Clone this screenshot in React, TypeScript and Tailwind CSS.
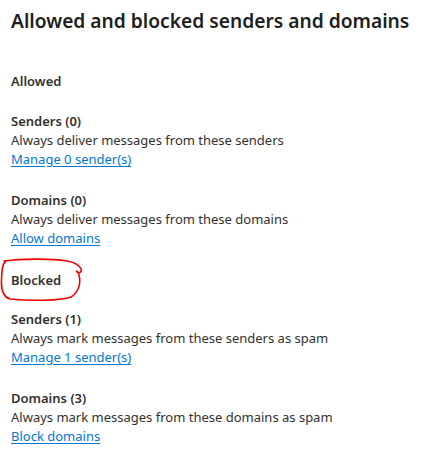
const font = { fontFamily: '"Noto Sans", "Open Sans", Arial, sans-serif' };

type Item = { title: string; text: string; link: string };

const allowed: Item[] = [
  { title: 'Senders (0)', text: 'Always deliver messages from these senders', link: 'Manage 0 sender(s)' },
  { title: 'Domains (0)', text: 'Always deliver messages from these domains', link: 'Allow domains' },
];

const blocked: Item[] = [
  { title: 'Senders (1)', text: 'Always mark messages from these senders as spam', link: 'Manage 1 sender(s)' },
  { title: 'Domains (3)', text: 'Always mark messages from these domains as spam', link: 'Block domains' },
];

function Group({ item }: { item: Item }) {
  return (
    <div className="flex flex-col text-[13px] leading-[19px] text-[#323130]">
      <span className="font-semibold">{item.title}</span>
      <span>{item.text}</span>
      <a href="#" className="self-start text-[#0078d4] underline underline-offset-2">
        {item.link}
      </a>
    </div>
  );
}

export default function App() {
  return (
    <div className="relative min-h-[469px] w-[425px] bg-white pl-[11px] pt-[7px]" style={font}>
      <h1 className="whitespace-nowrap text-[19.2px] font-semibold leading-[28px] text-[#201f1e]">
        Allowed and blocked senders and domains
      </h1>

      <h2 className="mt-[37px] text-[13px] font-semibold leading-[19px] text-[#323130]">Allowed</h2>
      <div className="mt-[21px] flex flex-col gap-[22px]">
        {allowed.map((it) => (
          <Group key={it.title} item={it} />
        ))}
      </div>

      <h2 className="mt-[23px] text-[13px] font-semibold leading-[19px] text-[#323130]">Blocked</h2>
      <div className="mt-[20px] flex flex-col gap-[22px]">
        {blocked.map((it) => (
          <Group key={it.title} item={it} />
        ))}
      </div>

      {/* red pen annotation around "Blocked" */}
      <svg className="pointer-events-none absolute left-0 top-0" width="425" height="469" fill="none">
        <path
          d="M4 261 C 20 259, 50 258, 67 261 C 74 262, 79 265, 81 269 C 82 272, 79 274, 77 272 C 76 270, 78 271, 79 275 C 81 283, 79 292, 71 297 C 60 301, 30 301, 10 299 C 3 297, 1 290, 1.5 280 C 2 270, 2 264, 6 261"
          stroke="#f00000"
          strokeWidth="1.6"
          strokeLinecap="round"
          strokeLinejoin="round"
        />
      </svg>
    </div>
  );
}
